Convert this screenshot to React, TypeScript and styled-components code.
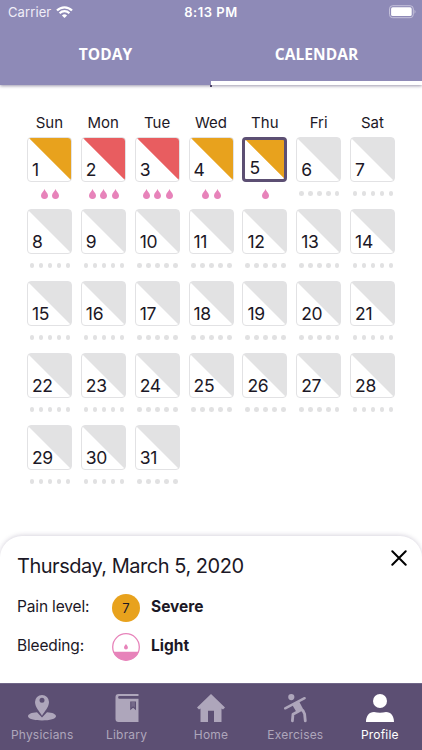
import React from "react";
import styled, { createGlobalStyle } from "styled-components";

const GlobalStyle = createGlobalStyle`
  * { box-sizing: border-box; }
  body { margin: 0; background: #fff; }
`;

const Screen = styled.main`
  width: 422px;
  height: 750px;
  display: flex;
  flex-direction: column;
  overflow: hidden;
  background: #fff;
  color: #1c1826;
  font-family: Inter, "Liberation Sans", sans-serif;
`;

const Header = styled.header`
  height: 85px;
  flex: none;
  display: flex;
  flex-direction: column;
  background: #8e8ab7;
  color: #fff;
  box-shadow: 0 1px 3px rgba(60, 50, 90, 0.5);
`;

const StatusBar = styled.div`
  height: 24px;
  flex: none;
  display: grid;
  grid-template-columns: 1fr auto 1fr;
  align-items: center;
  padding: 0 6px 0 8px;
  font-size: 13px;
  line-height: 24px;
`;

const Carrier = styled.div`
  display: flex;
  align-items: center;
  gap: 5px;
  letter-spacing: 0.1px;
  color: #f0eef8;
`;

const Clock = styled.div`
  padding-right: 2px;
  font-weight: 600;
  font-size: 13px;
  letter-spacing: 0.5px;
`;

const Battery = styled.svg`
  justify-self: end;
`;

const Tabs = styled.nav`
  flex: 1;
  display: grid;
  grid-template-columns: 1fr 1fr;
`;

const Tab = styled.div<{ $active?: boolean }>`
  position: relative;
  display: flex;
  align-items: center;
  justify-content: center;
  padding: ${(p) => (p.$active ? "2px 0 0" : "0 0 2px")};
  border-bottom: ${(p) => (p.$active ? "4px solid #fff" : "0")};
  font: 700 15.5px/20px "Open Sans", sans-serif;
  letter-spacing: 0.05px;

  &::after {
    content: "";
    display: ${(p) => (p.$active ? "block" : "none")};
    position: absolute;
    left: -1px;
    bottom: -6px;
    width: 2px;
    height: 2px;
    background: #4b4266;
  }
`;

const Calendar = styled.section`
  flex: 1;
  padding: 28px 23px 0;
`;

const WeekDays = styled.div`
  display: grid;
  grid-template-columns: repeat(7, 53.85px);
  height: 24px;
  font-size: 15px;
  line-height: 20px;
  text-align: center;
`;

const WeekDay = styled.span`
  padding-right: 1px;
`;

const Days = styled.div`
  display: grid;
  grid-template-columns: repeat(7, 53.85px);
  grid-auto-rows: 72px;
`;

const Day = styled.div`
  padding-left: 4px;
`;

const Tile = styled.div<{ $color: string; $edge: string; $selected?: boolean }>`
  width: 45px;
  height: 45px;
  display: flex;
  align-items: flex-end;
  padding: ${(p) => (p.$selected ? "0 4px 1px" : "0 4px 1px")};
  border: ${(p) => (p.$selected ? "3px solid #5c4f73" : "1px solid #e2e2e4")};
  border-radius: 4px;
  background: linear-gradient(to top right, #fff ${(p) => p.$edge}, ${(p) => p.$color} calc(${(p) => p.$edge} + 1.4%));
  font-size: 17.5px;
  line-height: 20px;
  letter-spacing: -0.3px;
`;

const Marks = styled.div`
  width: 46px;
  height: 23px;
  display: flex;
  align-items: center;
  justify-content: center;
  gap: 4.4px;
`;

const Dot = styled.i`
  width: 4.6px;
  height: 4.6px;
  border-radius: 50%;
  background: #e1e1e2;
`;

const Details = styled.section`
  position: relative;
  height: 147px;
  flex: none;
  padding: 17px 17px 0;
  border-radius: 22px 22px 0 0;
  background: #fff;
  box-shadow: 0 -1px 4px rgba(80, 70, 110, 0.22);
`;

const DateTitle = styled.h1`
  margin: 0 0 11px;
  font-size: 20px;
  font-weight: 400;
  line-height: 26px;
  letter-spacing: -0.48px;
`;

const CloseIcon = styled.svg`
  position: absolute;
  top: 14px;
  right: 15px;
`;

const DetailRow = styled.div`
  height: 38.5px;
  display: grid;
  grid-template-columns: 95px 39px 1fr;
  align-items: start;
  font-size: 15.5px;
  line-height: 20px;
`;

const Badge = styled.div`
  width: 28px;
  height: 28px;
  margin-top: 4px;
  border-radius: 50%;
  background: #e8a21d;
  font-size: 13px;
  line-height: 28px;
  text-align: center;
`;

const Label = styled.span`
  margin-top: 7px;
  letter-spacing: -0.15px;
`;

const Value = styled.strong`
  margin-top: 7px;
  font-weight: 700;
`;

const Drawing = styled.svg`
  display: block;
  flex: none;
  overflow: visible;
`;

const FlowIcon = styled(Drawing)`
  margin-top: 4px;
`;

const BottomBar = styled.nav`
  height: 67px;
  flex: none;
  display: grid;
  grid-template-columns: repeat(5, 1fr);
  background: #5c4f73;
  border-top: 1px solid #73698a;
`;

const NavItem = styled.div<{ $active?: boolean }>`
  display: flex;
  flex-direction: column;
  align-items: center;
  padding-top: 10px;
  color: ${(p) => (p.$active ? "#fff" : "#aea6bb")};
  font-size: 12px;
  line-height: 16px;
  letter-spacing: 0.2px;
`;

const NavLabel = styled.span`
  margin-top: 5px;
`;

const dropPath = "M3.5 0C4.2 2.3 7 4 7 6.6A3.5 3.4 0 0 1 0 6.6C0 4 2.8 2.3 3.5 0Z";

const Drop = () => (
  <Drawing width="7" height="10" viewBox="0 0 7 10">
    <path d={dropPath} fill="#e783ba" />
  </Drawing>
);

const logged: Record<number, { color: string; drops: number }> = {
  1: { color: "#e8a21d", drops: 2 },
  2: { color: "#e85d60", drops: 3 },
  3: { color: "#e85d60", drops: 3 },
  4: { color: "#e8a21d", drops: 2 },
  5: { color: "#e8a21d", drops: 1 },
};

const icons: Record<string, React.ReactNode> = {
  Physicians: (
    <>
      <path d="M9 18.2C3.5 18.5 0 20.2 0 22.2C0 24.6 6 26.4 14 26.4S28 24.6 28 22.2C28 20.2 24.5 18.5 19 18.2L14 23.4Z" fill="currentColor" />
      <path fillRule="evenodd" d="M14 1A7 7 0 0 0 7 8C7 13 11.5 17.5 14 21.7C16.5 17.5 21 13 21 8A7 7 0 0 0 14 1ZM14 3.8A2.5 2.5 0 1 1 14 8.8A2.5 2.5 0 0 1 14 3.8Z" fill="currentColor" />
    </>
  ),
  Library: (
    <>
      <path d="M5.5 0H25.5V2H6.5A1.4 1.4 0 0 0 6.5 4.8H25.5V28H5.5A3 3 0 0 1 2.5 25V3A3 3 0 0 1 5.5 0Z" fill="currentColor" />
      <path d="M6.5 2.7H25.5V4.1H6.5Z" fill="#5c4f73" />
      <path d="M17.2 7.5H23V16.2L20.1 13.8L17.2 16.2Z" fill="#5c4f73" />
      <path d="M18.3 8H21.9V13.7L20.1 12.3L18.3 13.7Z" fill="#75698a" />
    </>
  ),
  Home: <path d="M14 0L28 13.5L26 15.5L24.5 14.5V28H17V16.8H11V28H3.5V14.5L2 15.5L0 13.5Z" fill="currentColor" />,
  Exercises: (
    <>
      <circle cx="10.3" cy="3.1" r="3.1" fill="currentColor" />
      <path d="M4.2 14.3L23.6 4.2" stroke="currentColor" strokeWidth="2.5" strokeLinecap="round" fill="none" />
      <path d="M11 10.6L18 7.2L23.2 17L15.6 18.2Z" fill="currentColor" />
      <path d="M18 17L12 20.2L11.4 26.8M22 16.6L23.6 20L24.3 26.8" stroke="currentColor" strokeWidth="2.8" strokeLinecap="round" strokeLinejoin="round" fill="none" />
    </>
  ),
  Profile: (
    <>
      <circle cx="14" cy="7" r="7" fill="currentColor" />
      <path d="M0 28C0 22 3 18 8 18C12 19 16 19 20 18C25 18 28 22 28 28Z" fill="currentColor" />
    </>
  ),
};

export default function App() {
  return (
    <>
      <GlobalStyle />
      <Screen>
        <Header>
          <StatusBar>
            <Carrier>
              Carrier
              <Drawing width="17" height="12" viewBox="0 0 17 12">
                <g fill="none" stroke="#fff" strokeWidth="2.2">
                  <path d="M1 4.6C5.2.2 11.8.2 16 4.6" />
                  <path d="M3.6 7.3C6.4 4.5 10.6 4.5 13.4 7.3" />
                </g>
                <path d="M5.9 9.5Q8.5 7.1 11.1 9.5L8.5 12Z" fill="#fff" />
              </Drawing>
            </Carrier>
            <Clock>8:13 PM</Clock>
            <Battery width="27" height="14" viewBox="0 0 27 14">
              <rect x="0.5" y="0.7" width="23.8" height="12" rx="3.2" fill="none" stroke="#c4c1da" />
              <rect x="2.1" y="2.3" width="20.6" height="8.8" rx="1.6" fill="#fff" />
              <path d="M25.4 4.7Q28 6.7 25.4 8.7Z" fill="#b5b1d0" />
            </Battery>
          </StatusBar>
          <Tabs>
            <Tab>TODAY</Tab>
            <Tab $active>CALENDAR</Tab>
          </Tabs>
        </Header>
        <Calendar>
          <WeekDays>
            {["Sun", "Mon", "Tue", "Wed", "Thu", "Fri", "Sat"].map((d) => (
              <WeekDay key={d}>{d}</WeekDay>
            ))}
          </WeekDays>
          <Days>
            {Array.from({ length: 31 }, (_, i) => i + 1).map((n) => {
              const entry = logged[n];
              return (
                <Day key={n}>
                  <Tile
                    $color={entry ? entry.color : "#e2e2e3"}
                    $edge={entry ? "50.3%" : "49.3%"}
                    $selected={n === 5}
                  >
                    {n}
                  </Tile>
                  <Marks>
                    {entry
                      ? Array.from({ length: entry.drops }, (_, k) => <Drop key={k} />)
                      : Array.from({ length: 5 }, (_, k) => <Dot key={k} />)}
                  </Marks>
                </Day>
              );
            })}
          </Days>
        </Calendar>
        <Details>
          <DateTitle>Thursday, March 5, 2020</DateTitle>
          <CloseIcon width="16" height="16" viewBox="0 0 16 16">
            <path d="M1.3 1.3L14.7 14.7M14.7 1.3L1.3 14.7" stroke="#000" strokeWidth="2" strokeLinecap="round" />
          </CloseIcon>
          <DetailRow>
            <Label>Pain level:</Label>
            <Badge>7</Badge>
            <Value>Severe</Value>
          </DetailRow>
          <DetailRow>
            <Label>Bleeding:</Label>
            <FlowIcon width="28" height="28" viewBox="0 0 28 28">
              <circle cx="14" cy="14" r="13.3" fill="#fff" stroke="#e783ba" strokeWidth="1.3" />
              <path d="M1.2 18.7H26.8A13.7 13.7 0 0 1 1.2 18.7Z" fill="#e783ba" />
              <path d={dropPath} transform="translate(12 10.8) scale(.56)" fill="#e783ba" />
            </FlowIcon>
            <Value>Light</Value>
          </DetailRow>
        </Details>
        <BottomBar>
          {Object.keys(icons).map((name) => (
            <NavItem key={name} $active={name === "Profile"}>
              <Drawing width="28" height="28" viewBox="0 0 28 28">
                {icons[name]}
              </Drawing>
              <NavLabel>{name}</NavLabel>
            </NavItem>
          ))}
        </BottomBar>
      </Screen>
    </>
  );
}
